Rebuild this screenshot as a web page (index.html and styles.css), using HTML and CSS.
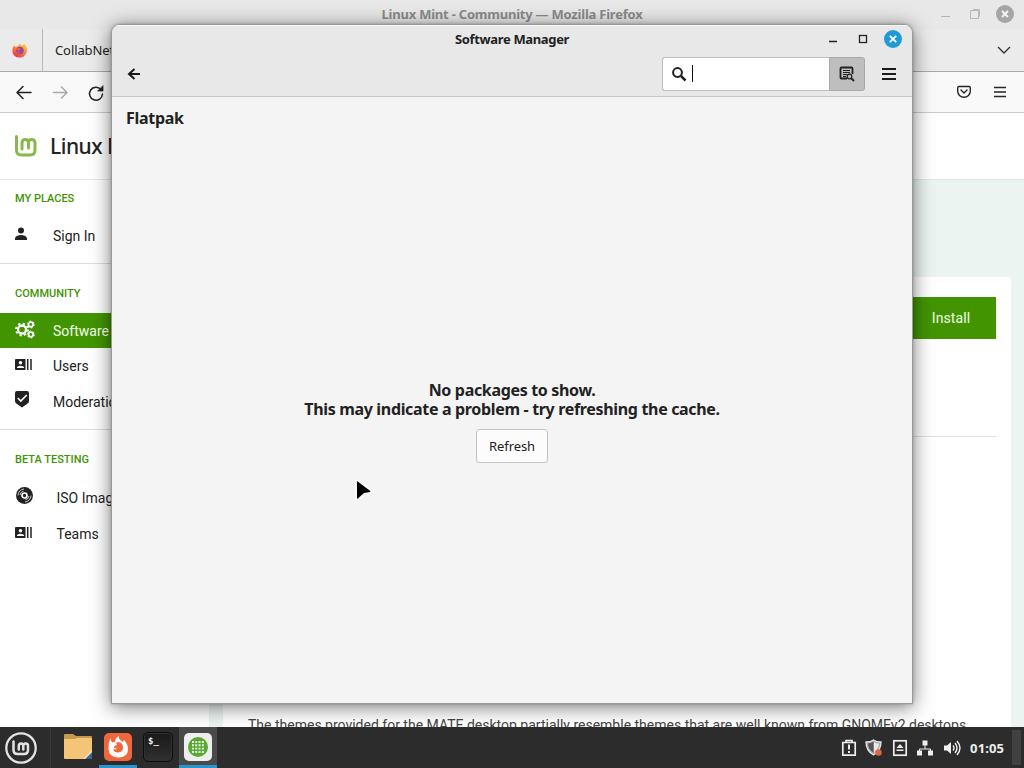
FILE: index.html
```html
<!DOCTYPE html>
<html lang="en">
<head>
<meta charset="utf-8">
<title>Desktop</title>
<link rel="stylesheet" href="styles.css">
</head>
<body>
<div class="desktop">
  <main class="browser">
    <header class="browser-title">
      <span class="browser-name">Linux Mint - Community — Mozilla Firefox</span>
      <div class="browser-controls">
        <svg width="80" height="28" viewBox="0 0 80 28"><path d="M5 16.5h9" stroke="#b2b2b2"/><path d="M34.500 10.500h8v8h-8zM37 9.500h6.500v7" fill="none" stroke="#b9b9b9"/><circle cx="69" cy="14" r="9" fill="#a6a6a6"/><path d="m66 11 6 6m0-6-6 6" stroke="#f5f5f5" stroke-width="2"/></svg>
      </div>
    </header>
    <div class="tabs">
      <div class="pinned">
        <svg width="16" height="16" viewBox="0 0 16 16"><defs><linearGradient id="fx" x1=".8" y1="0" x2=".2" y2="1"><stop offset="0" stop-color="#ffd43a"/><stop offset=".5" stop-color="#ff8139"/><stop offset="1" stop-color="#ed2456"/></linearGradient></defs><path d="M2 3.500 3.500 5 6 4 8 1.500l1 2 3-.5-.5-2C14 3 15.500 6 15 9c-1 4.500-4 6.500-7.500 6.500C3 15.500 0 12 .5 8 .6 6 1 5 2 3.500Z" fill="url(#fx)"/><circle cx="8" cy="8.500" r="3.700" fill="#8b4ba5"/><path d="M4 6.500c3-1 4 0 5 1-2 0-1.500 1-2 1.800-.5.800-1.500.5-2 .2.500 1.500 2 2 3.500 1.500" fill="#f45c3e"/></svg>
      </div>
      <div class="tab">CollabNet</div>
      <svg class="tab-menu" width="14" height="10" viewBox="0 0 14 10"><path d="m1 2 6 6 6-6" fill="none" stroke="#333" stroke-width="1.400"/></svg>
    </div>
    <nav class="toolbar">
      <svg width="104" height="40" viewBox="0 0 104 40" fill="none" stroke-linecap="round" stroke-linejoin="round" stroke-width="1.500"><path d="M31 20.500H17.500m5.500-6-6 6 6 6" stroke="#222"/><path d="M53.500 20.500H67m-5.500-5.500 5.500 5.500-5.500 5.500" stroke="#a8a8a8"/><path d="M101 17.500A6.500 6.500 0 1 0 102.500 22" stroke="#222"/><path d="M103 14v5h-5z" fill="#222" stroke="#222" stroke-width=".8"/></svg>
      <svg class="toolbar-end" width="54" height="20" viewBox="0 0 54 20" fill="none" stroke="#252525" stroke-width="1.400"><path d="M3 4.500H13Q14.300 4.500 14.300 6V9a6.300 6.300 0 0 1-12.600 0V6Q1.700 4.500 3 4.500"/><path d="m5 8 3 3 3-3" stroke-linecap="round"/><path d="M38 5.500h12M38 10h12M38 14.500h12"/></svg>
    </nav>
    <div class="site-head">
      <svg width="24" height="24" viewBox="0 0 24 24" fill="none" stroke="#86b84b" stroke-width="3" stroke-linecap="round"><path d="M2.500 2.500V16q0 5 5 5H16q5 0 5-5V9q0-3.500-3.300-3.500T14.500 9v5M14.500 9q0-3.500-3.200-3.500T8 9v6"/></svg>
      <span class="site-name">Linux Mint</span>
    </div>
    <div class="site-body">
      <aside class="sidebar">
        <section class="group first">
          <h2 class="label">MY PLACES</h2>
          <div class="item"><svg width="22" height="20" viewBox="0 0 22 20" fill="#222"><circle cx="6" cy="5.500" r="3"/><path d="M0 15v-1.500C0 11 4 10 6 10s6 1 6 3.500V15z"/></svg><span>Sign In</span></div>
        </section>
        <section class="group community">
          <h2 class="label">COMMUNITY</h2>
          <div class="item active"><svg width="22" height="20" viewBox="0 0 22 20" fill="none" stroke="#fff"><circle cx="7" cy="9.500" r="4" stroke-width="2.300"/><circle cx="7" cy="9.500" r="6" stroke-width="1.800" stroke-dasharray="2.300 2.412"/><circle cx="15.800" cy="4.500" r="2.300" stroke-width="1.700"/><circle cx="15.800" cy="4.500" r="3.500" stroke-dasharray="1.700 1.965"/><circle cx="15.800" cy="14.500" r="2.300" stroke-width="1.700"/><circle cx="15.800" cy="14.500" r="3.500" stroke-dasharray="1.700 1.965"/></svg><span>Software</span></div>
          <div class="item"><svg width="22" height="20" viewBox="0 0 22 20"><path d="M1 4h9.500v11H1Q0 15 0 14V5q0-1 1-1Z" fill="#222"/><circle cx="5.500" cy="7.800" r="1.800" fill="#fff"/><path d="M2 13v-1q3.500-2.500 7 0v1z" fill="#fff"/><path d="M12.700 4v11M16 4v11" stroke="#222" stroke-width="1.500"/></svg><span>Users</span></div>
          <div class="item"><svg width="22" height="20" viewBox="0 0 22 20"><path d="M2 0h10q2 0 2 2v8q0 2-2 3l-5 3.500L2 13q-2-1-2-3V2q0-2 2-2Z" fill="#222"/><path d="m2.800 7 3 3 6-6" fill="none" stroke="#fff" stroke-width="1.700"/></svg><span>Moderation</span></div>
        </section>
        <section class="group beta">
          <h2 class="label">BETA TESTING</h2>
          <div class="item"><svg width="22" height="20" viewBox="0 0 22 20"><circle cx="9.500" cy="8.500" r="8.500" fill="#222"/><circle cx="9.500" cy="8.500" r="2.500" fill="none" stroke="#fff" stroke-width="1.700"/><g fill="none" stroke="#ddd" stroke-width=".9"><path d="M3 8.500A6.500 6.500 0 0 1 9 2M5 8a4.500 4.500 0 0 1 3.500-3.800M16 8.500a6.500 6.500 0 0 1-6 6.500M14 9a4.500 4.500 0 0 1-3.500 3.800"/></g></svg><span>ISO Images</span></div>
          <div class="item"><svg width="22" height="20" viewBox="0 0 22 20"><path d="M1 4h9.500v11H1Q0 15 0 14V5q0-1 1-1Z" fill="#222"/><circle cx="5.500" cy="7.800" r="1.800" fill="#fff"/><path d="M2 13v-1q3.500-2.500 7 0v1z" fill="#fff"/><path d="M12.700 4v11M16 4v11" stroke="#222" stroke-width="1.500"/></svg><span>Teams</span></div>
        </section>
      </aside>
      <div class="content">
        <article class="card">
          <div class="card-top"><button class="install">Install</button></div>
          <p class="about">The themes provided for the MATE desktop partially resemble themes that are well known from GNOMEv2 desktops.</p>
        </article>
      </div>
    </div>
  </main>

  <section class="manager">
    <header class="manager-title">
      <h1 class="manager-name">Software Manager</h1>
      <svg class="manager-controls" width="78" height="22" viewBox="0 0 78 22"><path d="M3 13.500h8" stroke="#222" stroke-width="1.300"/><rect x="33.500" y="7.500" width="7" height="7" fill="none" stroke="#222" stroke-width="1.300"/><circle cx="67" cy="11" r="9" fill="#209bd5"/><path d="m63.800 7.800 6.400 6.400m0-6.400-6.400 6.400" stroke="#fff" stroke-width="1.800"/></svg>
    </header>
    <div class="manager-bar">
      <svg class="back" width="14" height="14" viewBox="0 0 14 14" fill="none" stroke="#191919" stroke-width="2"><path d="M13 7H2m5.500-5L2 7l5.500 5"/></svg>
      <div class="search">
        <svg width="16" height="16" viewBox="0 0 16 16" fill="none" stroke="#202020"><circle cx="6.500" cy="6.500" r="4.400" stroke-width="2"/><path d="m10 10 4.500 4.500" stroke-width="2.500"/></svg>
        <span class="caret"></span>
      </div>
      <button class="filter"><svg width="16" height="16" viewBox="0 0 16 16" fill="none" stroke="#202020"><path d="M13.500 8V2.500Q13.500 1.500 12.500 1.500H2.500Q1.500 1.500 1.500 2.500v9q0 1 1 1H8" stroke-width="1.800"/><path d="M4 4.500h7M4 6.500h7M4 8.500h4M4 10.500h3"/><circle cx="10.500" cy="10.500" r="2.300" stroke-width="1.200"/><path d="m12 12 3 3" stroke-width="1.800"/></svg></button>
      <svg class="menu" width="14" height="14" viewBox="0 0 14 14" stroke="#191919" stroke-width="2"><path d="M0 2h14M0 7h14M0 12h14"/></svg>
    </div>
    <div class="manager-body">
      <h2 class="category">Flatpak</h2>
      <div class="empty">
        <p class="line short">No packages to show.</p>
        <p class="line">This may indicate a problem - try refreshing the cache.</p>
        <button class="refresh">Refresh</button>
      </div>
    </div>
  </section>

  <footer class="panel">
    <div class="start"><svg width="34" height="34" viewBox="0 0 34 34" fill="none" stroke="#e3e3e3" stroke-linecap="round"><circle cx="17" cy="17" r="14.700" stroke-width="2.300"/><path d="M9.500 10.500V19q0 4 4 4H20q4 0 4-4v-4q0-2.500-2.300-2.500T19.300 15v3.500m0-3.500q0-2.500-2.200-2.500T14.800 15v3.500" stroke-width="2.500"/></svg></div>
    <div class="task"><svg width="30" height="30" viewBox="0 0 30 30"><path d="M1 3q0-1 1-1h8l3 2h15q1 0 1 1v20q0 1-1 1H2q-1 0-1-1Z" fill="#c8984f"/><path d="M1 8q0-1 1-1h10l2-1h14q1 0 1 1v20H2q-1 0-1-1Z" fill="#f4c477"/><path d="m22 27 7-7v7z" fill="#466482"/><path d="m22 27 7-7v-2l-9 9z" fill="#dce2e2"/></svg></div>
    <div class="task running"><svg width="30" height="30" viewBox="0 0 30 30"><rect x="1" y="1" width="28" height="28" rx="5" fill="#ef673a"/><path d="M7.500 6q0 3 2 4.500L12 10q0-4 4-6-.5 3 2 4.500l2 1.500 1-2q4 4 4 9 0 8.500-9.500 8.500T5.500 17Q5 11 7.500 6Z" fill="#fff"/><path d="M13 10.500q6-1.500 7 4 .5 5.500-5 6-4 0-5-3.500 3 1 4-.5l-3-.5q-.5-2 3-3z" fill="#ef673a"/></svg></div>
    <div class="task terminal"><div class="term-icon">$_</div></div>
    <div class="task running current"><svg width="30" height="30" viewBox="0 0 30 30"><rect x="1" y="1" width="28" height="28" rx="5" fill="#eee"/><circle cx="15" cy="15" r="10" fill="#58a933"/><path d="M9 10h13M9 13.300h13M9 16.600h13M9 20h13" fill="none" stroke="#eefbe8" stroke-width="1.900" stroke-dasharray="1.900 1.400"/></svg></div>
    <div class="tray">
      <svg width="16" height="18" viewBox="0 0 16 18"><path d="M1.800 3.500h12.400v12.700H1.800zM5 3.500V1.500h6v2" fill="none" stroke="#eee" stroke-width="1.700"/><path d="M8 5.500v5M8 12v2" stroke="#eee" stroke-width="2"/></svg>
      <svg width="18" height="18" viewBox="0 0 18 18"><path d="M1 3q5 0 7.500-2Q11 3 16 3q0 9-7.500 13Q1 12 1 3Z" fill="#aaa" stroke="#e4e4e4" stroke-width="1.300"/><path d="M3 4.500q3 0 5.500-2v11.300Q3 10 3 4.500Z" fill="#555"/><path d="M9 3q2 1.500 5 1.500 0 5-5 9Z" fill="#e7e7e7"/><circle cx="13.500" cy="13.500" r="3.200" fill="#de6547"/></svg>
      <svg width="16" height="18" viewBox="0 0 16 18"><rect x="1.800" y="1.800" width="12.400" height="14.400" fill="none" stroke="#eee" stroke-width="1.700"/><path d="m8 5 3.500 4h-7zM4.500 10.500h7V12h-7z" fill="#eee"/></svg>
      <svg width="16" height="18" viewBox="0 0 16 18"><path d="M8 4v6M2.500 14v-4h11v4" fill="none" stroke="#eee"/><path d="M5.500 1.500h5v5h-5zM0 11.500h5v5H0zM11 11.500h5v5h-5z" fill="#eee"/></svg>
      <svg width="18" height="18" viewBox="0 0 18 18"><path d="M1 6.500h3L8 3v12l-4-3.500H1z" fill="#eee"/><path d="M10 6.500q2 2.500 0 5M12 4q4 5 0 10M14 2q6 7 0 14" fill="none" stroke="#eee" stroke-width="1.400"/></svg>
      <span class="clock">01:05</span>
    </div>
    <div class="show-desktop"></div>
  </footer>
  <svg class="cursor" width="18" height="22" viewBox="0 0 18 22"><path d="M2 2v18l4-2 5-4 5-2z" fill="#000" stroke="#fff" stroke-width="3" stroke-linejoin="round" opacity=".7"/><path d="M2 2v17q0 1 1 .5l2-2 4-3.500 6-1q1-.5 0-1.200Z" fill="#000"/></svg>
</div>
</body>
</html>
```
FILE: styles.css
```css
* { box-sizing: border-box; }
body { margin: 0; color: #222; font-family: "Noto Sans", sans-serif; }
h1, h2, p { margin: 0; }
button { padding: 0; font: inherit; }
svg { display: block; flex: none; }
.desktop { position: relative; width: 1024px; height: 768px; overflow: hidden; display: flex; flex-direction: column; }

.browser { height: 727px; overflow: hidden; display: flex; flex-direction: column; background: #fff; }
.browser-title { height: 29px; flex: none; display: grid; grid-template-columns: 90px 1fr 90px; background: #e8e8e8; }
.browser-name { grid-column: 2; text-align: center; font-size: 13px; line-height: 28px; font-weight: 700; color: #8b8b8b; letter-spacing: -.22px; }
.browser-controls { padding-left: 2px; }
.tabs { height: 43px; flex: none; display: flex; align-items: stretch; background: #ebebeb; border-bottom: 1px solid #aaa; }
.pinned { width: 43px; display: flex; align-items: center; padding-left: 12px; border-right: 1px solid #bbb; }
.tab { padding-left: 12px; font-size: 13px; line-height: 42px; letter-spacing: -.1px; }
.tab-menu { align-self: center; margin: 0 13px 0 auto; }
.toolbar { height: 41px; flex: none; display: flex; align-items: center; background: #f9f9f9; border-bottom: 1px solid #ccc; }
.toolbar-end { margin: 0 14px 0 auto; }
.site-head { height: 67px; flex: none; display: flex; align-items: center; gap: 12px; padding-left: 14px; border-bottom: 1px solid #e3e6e5; }
.site-name { font-size: 21px; font-weight: 500; line-height: 30px; letter-spacing: -.5px; white-space: nowrap; }
.site-body { flex: 1; min-height: 0; display: flex; }
.sidebar { width: 209px; flex: none; font-family: Roboto, sans-serif; background: #fff; }
.group { padding: 11px 0 10px; border-bottom: 1px solid #ddd; }
.group.first { padding: 0 0 9px; }
.group.beta { border: 0; }
.label { height: 38px; padding-left: 15px; font-size: 11px; line-height: 37px; font-weight: 500; color: #429300; }
.item { height: 36px; display: flex; align-items: center; gap: 16px; padding-left: 15px; font-size: 14px; white-space: nowrap; }
.item svg { position: relative; top: -1px; }
.item.active { color: #f5ffef; background: #429500; height: 35px; }
.group.community { padding-bottom: 9px; }
.group.community .item:last-child { height: 36px; }
.group.beta .label { height: 39px; }
.group.beta .item { gap: 19.5px; }
.content { flex: 1; padding: 97px 13px 0 14px; background: #ebf4f1; }
.card { height: 500px; background: #fff; border-radius: 4px; padding: 20px 15px 0 25px; }
.card-top { height: 140px; display: flex; align-items: flex-start; justify-content: flex-end; border-bottom: 1px solid #e1e1e1; }
.install { width: 90px; height: 42px; border: 0; color: #f2ffeb; background: #429500; font: 14px/42px Roboto, sans-serif; letter-spacing: .1px; }
.about { margin-top: 278px; font: 14px/20px Roboto, sans-serif; color: #444; white-space: nowrap; }

.manager { position: absolute; left: 111px; top: 24px; width: 802px; height: 680px; display: flex; flex-direction: column; overflow: hidden; border: 1px solid #999; border-radius: 9px 9px 0 0; background: #f4f4f4; box-shadow: 0 3px 20px rgba(0,0,0,.53), 0 0 3px rgba(0,0,0,.25); }
.manager-title { height: 29px; flex: none; display: grid; grid-template-columns: 90px 1fr 90px; border-top: 1px solid #f7f7f7; background: #e8e8e8; }
.manager-name { grid-column: 2; text-align: center; font-size: 13px; line-height: 26px; letter-spacing: -.35px; }
.manager-controls { margin: 2px 0 0 4px; }
.manager-bar { height: 43px; flex: none; display: flex; align-items: center; padding: 0 16px 3px 15px; background: #e8e8e8; border-bottom: 1px solid #c6c6c6; }
.search { width: 167px; height: 34px; margin-left: auto; display: flex; align-items: center; gap: 5px; padding-left: 8px; background: #fff; border: 1px solid #bdbdbd; border-right: 0; border-radius: 3px 0 0 3px; }
.caret { width: 1px; height: 17px; background: #111; }
.filter { width: 36px; height: 34px; display: flex; align-items: center; justify-content: center; background: #bebebe; border: 1px solid #a9a9a9; border-radius: 0 3px 3px 0; }
.menu { margin-left: 17px; }
.manager-body { flex: 1; display: flex; flex-direction: column; padding: 10px 14px 0; }
.category { font-size: 16px; line-height: 22px; letter-spacing: -.3px; }
.empty { display: flex; flex-direction: column; align-items: center; padding-top: 252px; }
.line { font-size: 16px; font-weight: 700; line-height: 19px; letter-spacing: -.33px; white-space: nowrap; }
.refresh { width: 72px; height: 34px; margin-top: 10px; background: #fcfcfc; color: #222; border: 1px solid #c4c4c4; border-radius: 3px; font-size: 13px; letter-spacing: -.1px; }

.panel { position: relative; height: 41px; flex: none; display: flex; align-items: stretch; background: #2c2c2c; }
.start { width: 51px; padding: 4px 0 0 4px; border-right: 1px solid #383838; }
.task { width: 38px; margin-left: 2px; padding: 5px 4px 0; }
.start + .task { margin-left: 8px; }
.running { border-bottom: 3px solid #2796cf; }
.current { background: #4a4a4a; }
.term-icon { width: 30px; height: 30px; padding: 3px 0 0 4px; background: linear-gradient(#191919, #303030); border: 1px solid #0e0e0e; border-radius: 5px; color: #eee; font: 700 9px/10px "DejaVu Sans Mono", monospace; box-shadow: inset 0 0 0 1px #303030; }
.tray { margin-left: auto; display: flex; align-items: center; gap: 9.500px; color: #eee; }
.tray svg:nth-child(2) { margin: 0 -1px -1px -1px; }
.clock { font-size: 13px; font-weight: 700; letter-spacing: .1px; line-height: 20px; }
.show-desktop { width: 9px; margin: 3px 3px 3px 8px; background: #414141; }
.cursor { position: absolute; left: 355px; top: 479px; }
```
